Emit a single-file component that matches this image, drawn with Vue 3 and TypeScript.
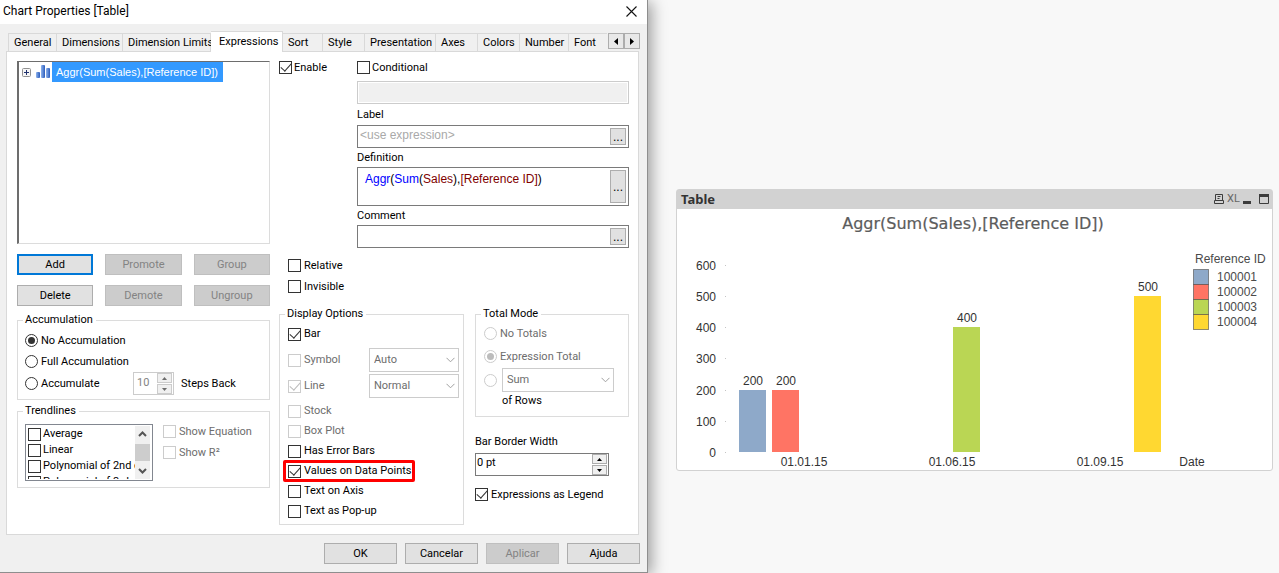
<script setup lang="ts">
import { ref } from 'vue'

const tabs = ['General', 'Dimensions', 'Dimension Limits', 'Expressions', 'Sort', 'Style', 'Presentation', 'Axes', 'Colors', 'Number', 'Font']
const activeTab = ref('Expressions')

interface Option { label: string; checked?: boolean; disabled?: boolean; select?: string; marked?: boolean }
const displayOptions: Option[] = [
  { label: 'Bar', checked: true },
  { label: 'Symbol', disabled: true, select: 'Auto' },
  { label: 'Line', checked: true, disabled: true, select: 'Normal' },
]
const pointOptions: Option[] = [
  { label: 'Stock', disabled: true },
  { label: 'Box Plot', disabled: true },
  { label: 'Has Error Bars' },
  { label: 'Values on Data Points', checked: true, marked: true },
  { label: 'Text on Axis' },
  { label: 'Text as Pop-up' },
]
const trendlines = ['Average', 'Linear', 'Polynomial of 2nd degree', 'Polynomial of 3rd degree']

const baseline = 243
const scale = 0.312
const ticks = [600, 500, 400, 300, 200, 100, 0]
const bars = [
  { x: 62, value: 200, color: '#8ea9c9' },
  { x: 95, value: 200, color: '#ff7464' },
  { x: 276, value: 400, color: '#bad654' },
  { x: 457, value: 500, color: '#ffd831' },
]
const dates = [
  { x: 127, text: '01.01.15' },
  { x: 275, text: '01.06.15' },
  { x: 423, text: '01.09.15' },
  { x: 515, text: 'Date' },
]
const legend = [
  { text: '100001', color: '#8ea9c9' },
  { text: '100002', color: '#ff7464' },
  { text: '100003', color: '#bad654' },
  { text: '100004', color: '#ffd831' },
]
</script>

<template>
  <main class="desktop">
    <section class="dialog" aria-label="Chart Properties">
      <header class="titlebar">
        <h1>Chart Properties [Table]</h1>
        <button class="close" aria-label="Close">
          <svg width="11" height="11" viewBox="0 0 11 11"><path d="M.5 .5l10 10M10.5 .5l-10 10" stroke="#111" stroke-width="1.1" fill="none" /></svg>
        </button>
      </header>

      <nav class="tabbar">
        <div class="tabs">
          <button v-for="t in tabs" :key="t" class="tab" :class="{ active: t === activeTab }" @click="activeTab = t">{{ t }}</button>
        </div>
        <div class="arrows">
          <button aria-label="Scroll left"><svg width="4" height="7" viewBox="0 0 4 7"><path d="M4 0v7L0 3.5z" /></svg></button>
          <button aria-label="Scroll right"><svg width="4" height="7" viewBox="0 0 4 7"><path d="M0 0v7l4-3.5z" /></svg></button>
        </div>
      </nav>

      <div class="panel">
        <div class="left">
          <div class="tree" role="tree">
            <div class="node" role="treeitem">
              <svg class="plus" width="9" height="9" viewBox="0 0 9 9"><rect x=".5" y=".5" width="8" height="8" rx="1" fill="#f6f6f6" stroke="#919191" /><path d="M2 4.5h5M4.5 2v5" stroke="#20326e" /></svg>
              <svg class="bars" width="15" height="14" viewBox="0 0 15 14">
                <defs><linearGradient id="blueBar"><stop offset="0" stop-color="#8fb4ee" /><stop offset="1" stop-color="#2a5bbb" /></linearGradient></defs>
                <rect x="0" y="7" width="4" height="6" rx="1" fill="url(#blueBar)" />
                <rect x="5" y="0" width="4" height="13" rx="1" fill="url(#blueBar)" />
                <rect x="10" y="3" width="4" height="10" rx="1" fill="url(#blueBar)" />
              </svg>
              <span class="selected">Aggr(Sum(Sales),[Reference ID])</span>
            </div>
          </div>
          <div class="actions">
            <button class="btn primary">Add</button>
            <button class="btn" disabled>Promote</button>
            <button class="btn" disabled>Group</button>
            <button class="btn">Delete</button>
            <button class="btn" disabled>Demote</button>
            <button class="btn" disabled>Ungroup</button>
          </div>

          <fieldset class="accumulation">
            <legend>Accumulation</legend>
            <label class="opt"><input type="radio" name="acc" checked />No Accumulation</label>
            <label class="opt"><input type="radio" name="acc" />Full Accumulation</label>
            <div class="steps">
              <label class="opt"><input type="radio" name="acc" />Accumulate</label>
              <div class="spin small off">
                <input id="steps" type="text" value="10" disabled />
                <div class="spin-buttons">
                  <button disabled aria-label="Increase"><svg width="5" height="3" viewBox="0 0 5 3"><path d="M0 3h5L2.5 0z" /></svg></button>
                  <button disabled aria-label="Decrease"><svg width="5" height="3" viewBox="0 0 5 3"><path d="M0 0h5L2.5 3z" /></svg></button>
                </div>
              </div>
              <label for="steps">Steps Back</label>
            </div>
          </fieldset>

          <fieldset class="trend">
            <legend>Trendlines</legend>
            <div class="trend-body">
              <div class="listbox">
                <div class="list-items">
                  <label v-for="t in trendlines" :key="t" class="opt tight"><input type="checkbox" />{{ t }}</label>
                </div>
                <div class="scroll">
                  <svg width="9" height="6" viewBox="0 0 9 6"><path d="M1 5l3.5-3.5L8 5" /></svg>
                  <span class="thumb"></span>
                  <svg width="9" height="6" viewBox="0 0 9 6"><path d="M1 1l3.5 3.5L8 1" /></svg>
                </div>
              </div>
              <div class="trend-side">
                <label class="opt off"><input type="checkbox" disabled />Show Equation</label>
                <label class="opt off"><input type="checkbox" disabled />Show R²</label>
              </div>
            </div>
          </fieldset>
        </div>

        <div class="right">
          <div class="form">
            <label class="opt tight enable"><input type="checkbox" checked />Enable</label>
            <div class="fields">
              <label class="opt tight conditional"><input type="checkbox" />Conditional</label>
              <input class="blocked" type="text" aria-label="Condition" disabled />
              <label class="caption" for="label">Label</label>
              <div class="field">
                <input id="label" type="text" placeholder="&lt;use expression&gt;" />
                <button aria-label="Edit label">...</button>
              </div>
              <span id="definition" class="caption">Definition</span>
              <div class="field tall">
                <div class="code" role="textbox" contenteditable="true" spellcheck="false" aria-labelledby="definition"><b>Aggr</b><i>(</i><b>Sum</b><i>(</i>Sales<i>),</i>[Reference ID]<i>)</i></div>
                <button aria-label="Edit definition">...</button>
              </div>
              <label class="caption" for="comment">Comment</label>
              <div class="field">
                <input id="comment" type="text" />
                <button aria-label="Edit comment">...</button>
              </div>
            </div>
          </div>

          <div class="flags">
            <label class="opt"><input type="checkbox" />Relative</label>
            <label class="opt"><input type="checkbox" />Invisible</label>
          </div>

          <div class="groups">
            <fieldset class="display">
              <legend>Display Options</legend>
              <div v-for="o in displayOptions" :key="o.label" class="line">
                <label class="opt" :class="{ off: o.disabled }"><input type="checkbox" :checked="o.checked" :disabled="o.disabled" />{{ o.label }}</label>
                <div v-if="o.select" class="combo">
                  <select disabled :aria-label="o.label"><option>{{ o.select }}</option></select>
                  <svg width="9" height="6" viewBox="0 0 9 6"><path d="M.5 .8l4 4 4-4" /></svg>
                </div>
              </div>
              <div class="points">
                <label v-for="o in pointOptions" :key="o.label" class="opt" :class="{ off: o.disabled, marked: o.marked }"><input type="checkbox" :checked="o.checked" :disabled="o.disabled" />{{ o.label }}</label>
              </div>
            </fieldset>

            <div class="totals">
              <fieldset class="mode">
                <legend>Total Mode</legend>
                <label class="opt off"><input type="radio" name="total" disabled />No Totals</label>
                <label class="opt off"><input type="radio" name="total" checked disabled />Expression Total</label>
                <div class="aggregate">
                  <input type="radio" name="total" aria-label="Aggregate" disabled />
                  <div class="combo">
                    <select id="rows" disabled><option>Sum</option></select>
                    <svg width="9" height="6" viewBox="0 0 9 6"><path d="M.5 .8l4 4 4-4" /></svg>
                  </div>
                </div>
                <label class="rows" for="rows">of Rows</label>
              </fieldset>
              <label class="border-label" for="bbw">Bar Border Width</label>
              <div class="spin wide">
                <input id="bbw" type="text" value="0 pt" />
                <div class="spin-buttons">
                  <button aria-label="Increase"><svg width="5" height="3" viewBox="0 0 5 3"><path d="M0 3h5L2.5 0z" /></svg></button>
                  <button aria-label="Decrease"><svg width="5" height="3" viewBox="0 0 5 3"><path d="M0 0h5L2.5 3z" /></svg></button>
                </div>
              </div>
              <label class="opt as-legend"><input type="checkbox" checked />Expressions as Legend</label>
            </div>
          </div>
        </div>
      </div>

      <footer class="footer">
        <button class="btn">OK</button>
        <button class="btn">Cancelar</button>
        <button class="btn" disabled>Aplicar</button>
        <button class="btn">Ajuda</button>
      </footer>
    </section>

    <section class="stage">
      <article class="chart">
        <header class="chart-head">
          <h2>Table</h2>
          <div class="tools">
            <button aria-label="Print"><svg width="10" height="10" viewBox="0 0 10 10"><path d="M1.5 6.500V.5h7v6M.5 6.500h9v3h-9zM3.500 2.500h3M3.500 4.500h2" stroke="#3c3c3c" fill="none" /></svg></button>
            <button class="xl" aria-label="Export to Excel">XL</button>
            <button aria-label="Minimize"><svg width="8" height="10" viewBox="0 0 8 10"><path d="M0 7h8v3H0z" fill="#3c3c3c" /></svg></button>
            <button class="max" aria-label="Maximize"><svg width="10" height="10" viewBox="0 0 10 10"><path d="M.5 .5h9v9h-9z" stroke="#3c3c3c" fill="none" /><path d="M0 0h10v3H0z" fill="#3c3c3c" /></svg></button>
          </div>
        </header>
        <svg class="plot" viewBox="0 0 595 261" role="img" aria-label="Aggr(Sum(Sales),[Reference ID])">
          <text class="heading" x="296" y="20" text-anchor="middle">Aggr(Sum(Sales),[Reference ID])</text>
          <g v-for="t in ticks" :key="t">
            <text x="39" :y="baseline - t * scale + 5" text-anchor="end">{{ t }}</text>
            <rect x="48" :y="Math.round(baseline - t * scale)" width="1" height="1" fill="#c4c4c4" />
          </g>
          <g v-for="b in bars" :key="b.x">
            <rect :x="b.x" :y="Math.round(baseline - b.value * scale)" width="27" :height="Math.round(b.value * scale)" :fill="b.color" />
            <text :x="b.x + 14" :y="Math.round(baseline - b.value * scale) - 5" text-anchor="middle">{{ b.value }}</text>
          </g>
          <text v-for="d in dates" :key="d.text" :x="d.x" y="257" text-anchor="middle">{{ d.text }}</text>
          <text class="key" x="518" y="54">Reference ID</text>
          <g v-for="(l, i) in legend" :key="l.text">
            <rect x="516.5" :y="60.5 + i * 15" width="15" height="15" :fill="l.color" stroke="#4a4a4a" stroke-opacity=".6" />
            <text class="key" x="540" :y="72 + i * 15">{{ l.text }}</text>
          </g>
        </svg>
      </article>
    </section>
  </main>
</template>

<style>
body { margin: 0; background: #f8f8f8; }
</style>

<style scoped>
* { box-sizing: border-box; }
button, input, select { font: inherit; color: inherit; margin: 0; padding: 0; border-radius: 0; }
button { display: flex; align-items: center; justify-content: center; border: 0; background: none; }
svg { display: block; flex: none; }
.desktop { display: grid; grid-template-columns: 648fr 631fr; min-height: 100vh; font: 11px/14px Roboto, "Liberation Sans", sans-serif; color: #000; white-space: nowrap; overflow: hidden; }
.dialog { background: #f0f0f0; border-right: 1px solid #8e8e8e; border-bottom: 1px solid #8e8e8e; box-shadow: 4px 2px 14px rgba(0, 0, 0, .36); min-width: 0; }
.titlebar { display: flex; align-items: center; justify-content: space-between; height: 24px; padding: 0 10px 2px 3px; background: #fff; }
h1 { margin: 0; font: 12px/16px Roboto, "Noto Sans", sans-serif; }

.tabbar { display: flex; justify-content: space-between; padding: 7px 7px 0 8px; gap: 1px; }
.tabs { flex: 1; display: grid; grid-template-columns: 49fr 66fr 88fr 72fr 40fr 42fr 71fr 42fr 42fr 49fr 38fr; height: 20px; align-items: end; }
.tab { justify-content: flex-start; height: 18px; padding-left: 5px; border: 1px solid #d9d9d9; border-width: 1px 1px 0 0; min-width: 0; }
.tab:first-child { border-left-width: 1px; }
.tab.active { height: 21px; margin-bottom: -1px; padding-left: 8px; background: #fff; position: relative; }
.tab:last-child { border-right: 0; }
.arrows { display: flex; padding-top: 2px; }
.arrows button { width: 16px; height: 16px; border: 1px solid #adadad; background: #e8e8e8; }

.panel { display: grid; grid-template-columns: 253fr 350fr; gap: 9px; margin: 0 8px 0 6px; padding: 9px 9px 9px 10px; border: 1px solid #d9d9d9; background: #fff; }
.left, .right { min-width: 0; }
.tree { height: 183px; border: 1px solid #dcdcdc; border-top: 1px solid #6d6d6d; border-left: 2px solid #6d6d6d; }
.node { display: flex; align-items: center; height: 20px; padding-left: 3px; font: 11px "Liberation Sans", sans-serif; }
.bars { margin: 0 1px 0 5px; }
.selected { padding: 0 5px 0 4px; line-height: 20px; background: #3399ff; color: #fff; }
.actions { display: grid; grid-template-columns: repeat(3, 76fr); gap: 10px 12px; margin: 10px 0 7px; }
.btn { height: 21px; border: 1px solid #adadad; background: #e1e1e1; }
.btn:disabled { background: #ccc; border-color: #bfbfbf; color: #838383; }
.primary { border: 2px solid #0078d7; }

fieldset { margin: 0; padding: 0; border: 1px solid #dcdcdc; min-width: 0; }
legend { margin-left: 5px; padding: 0 3px 0 2px; line-height: 14px; }
.opt { display: flex; align-items: center; gap: 3px; height: 21px; }
.opt.tight { height: 16px; gap: 2px; }
.off { color: #6d6d6d; }
input[type="checkbox"], input[type="radio"] { appearance: none; display: grid; place-content: center; flex: none; width: 13px; height: 13px; border: 1px solid #333; background: #fff; color: #333; }
input[type="radio"] { border-radius: 50%; }
input[type="checkbox"]:checked::before { content: ""; width: 9px; height: 5px; margin-bottom: 3px; border: solid; border-width: 0 0 1px 1px; transform: rotate(-48deg); }
input[type="radio"]:checked::before { content: ""; width: 7px; height: 7px; border-radius: 50%; background: currentColor; }
input[type="checkbox"]:disabled, input[type="radio"]:disabled { border-color: #ccc; color: #bcbcbc; }

.accumulation { height: 87px; }
.accumulation .opt, .steps { margin-left: 7px; }
.accumulation legend + .opt { margin-top: 3px; }
.steps { display: grid; grid-template-columns: 108px 41px 1fr; align-items: center; height: 21px; }
.steps .opt { margin-left: 0; }
.steps > label:last-child { padding-left: 7px; }
.spin { display: flex; height: 23px; border: 1px solid #7a7a7a; background: #fff; }
.spin input { flex: 1; min-width: 0; border: 0; background: none; outline: 0; padding: 0 0 4px 1px; }
.spin.off { border-color: #ccc; color: #838383; }
.spin.off input { padding: 0 0 2px 3px; }
.spin-buttons { display: grid; gap: 1px; width: 17px; padding: 0 1px; border-left: 0; background: #fff; }
.spin-buttons button { border: 1px solid #adadad; background: #f0f0f0; }
.off .spin-buttons button { border-color: #ccc; fill: #6d6d6d; }

.trend { height: 84px; margin-top: 4px; }
.trend-body { display: grid; grid-template-columns: 128px 1fr; gap: 10px; margin: 6px 7px 0; }
.listbox { display: flex; height: 57px; padding: 1px 2px 1px 2px; border: 1px solid #828790; overflow: hidden; }
.list-items { flex: 1; overflow: hidden; min-width: 0; }
.scroll { display: flex; flex-direction: column; align-items: center; justify-content: space-between; width: 15px; padding: 5px 0; background: #f0f0f0; }
.scroll svg { fill: none; stroke: #555; stroke-width: 2; }
.thumb { width: 15px; height: 17px; background: #cdcdcd; }
.trend-side { margin-top: -3px; }

.form { display: grid; grid-template-columns: 78px 1fr; }
.fields { display: flex; flex-direction: column; }
.opt.enable, .opt.conditional { height: 13px; }
.blocked { height: 23px; margin: 7px 0 4px; border: 1px solid #ccc; padding: 1px; background: #f0f0f0 content-box; }
.caption { height: 14px; margin-bottom: 3px; }
.field { display: flex; height: 23px; margin-bottom: 3px; padding: 2px; border: 1px solid #7a7a7a; font: 12px/14px "Liberation Sans", sans-serif; }
.field.tall { height: 39px; margin: -1px 0 3px; }
.field.tall + .caption { margin-bottom: 2px; }
.field input { flex: 1; min-width: 0; border: 0; outline: 0; padding-bottom: 3px; }
.field input::placeholder { color: #a9a9a9; opacity: 1; }
.field button { width: 16px; border: 1px solid #adadad; background: #e1e1e1; }
.code { flex: 1; padding: 2px 5px; color: #800000; outline: 0; }
.code b { font-weight: normal; color: #00f; }
.code i { font-style: normal; color: #000; }
.flags { margin: 4px 0 10px; padding-left: 9px; }
.groups { display: grid; grid-template-columns: 185fr 154fr; gap: 11px; }
.line { display: grid; grid-template-columns: 81px 1fr; align-items: center; height: 26px; margin: 0 4px 0 8px; }
.points { margin: 2px 0 3px 8px; }
.points .opt { height: 20px; }
.marked { position: relative; width: max-content; }
.marked::after { content: ""; position: absolute; inset: -1px -4px -1px -5px; border: 3px solid #f00; border-radius: 2px; }
.combo { display: grid; grid-template-columns: 1fr 9px 4px; align-items: center; height: 24px; }
.combo select { grid-area: 1 / 1 / 2 / 4; width: 100%; height: 24px; appearance: none; padding: 0 0 1px 4px; border: 1px solid #ccc; background: #fff; color: #6d6d6d; opacity: 1; }
.combo svg { grid-area: 1 / 2; fill: none; stroke: #a0a0a0; stroke-width: 1; }
.mode { height: 110px; padding: 1px 14px 0 8px; }
.mode .opt { height: 23px; }
.mode legend { margin-left: -3px; }
.aggregate { display: grid; grid-template-columns: 18px 1fr; align-items: center; height: 23px; }
.rows { display: block; margin: 3px 0 0 18px; }
.border-label { display: block; margin: 18px 0 4px; }
.spin.wide { width: 134px; }
.as-legend { margin-top: 8px; }

.footer { display: flex; justify-content: flex-end; gap: 8px; padding: 8px 7px 8px 0; }
.footer .btn { width: 73px; }

.stage { padding: 189px 6px 0 28px; min-width: 0; }
.chart { border: 1px solid #d2d2d2; border-radius: 3px; background: #fff; }
.chart-head { display: flex; align-items: center; justify-content: space-between; height: 19px; padding: 0 3px 2px 4px; background: #d2d2d2; }
h2 { margin: 0; font: bold 13px/16px "Noto Sans", sans-serif; color: #333; }
.tools { display: flex; align-items: center; gap: 4px; }
.tools .xl { width: 11px; font: 11px/14px Roboto, sans-serif; color: #666; }
.tools .max { margin-left: 4px; }
.plot { width: 100%; height: auto; font: 12px "Liberation Sans", sans-serif; fill: #333; }
.heading { font: 16px "DejaVu Sans", sans-serif; fill: #5c5c5c; stroke: #5c5c5c; stroke-width: .2; }
.key { fill: #4a4a4a; }
</style>
